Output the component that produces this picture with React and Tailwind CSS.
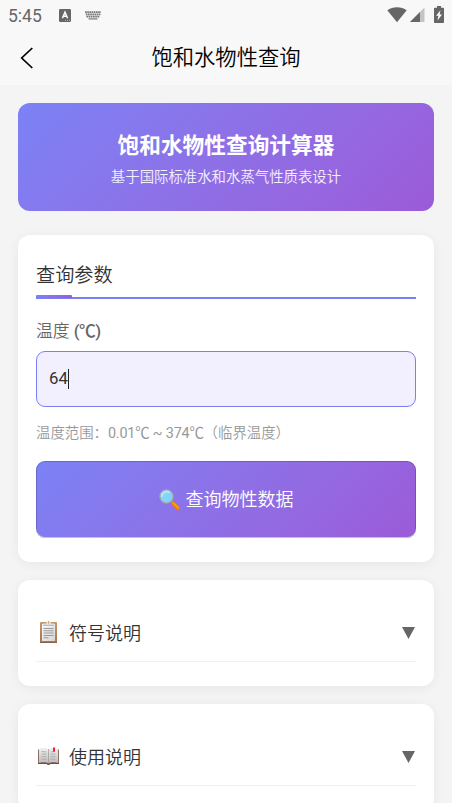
import { useState } from "react";

const sections = [
  { id: "symbols", title: "符号说明", icon: ClipboardIcon },
  { id: "usage", title: "使用说明", icon: BookIcon },
];

function StatusBar() {
  return (
    <div className="flex h-[31px] items-center justify-between text-[#666]">
      <div className="flex items-center pl-2">
        <span className="w-[51px] pt-px text-[17.5px] leading-[30px] font-normal">5:45</span>
        <svg width="12" height="13" viewBox="0 0 12 13" className="mr-[14px]">
          <rect width="12" height="13" rx="1.2" fill="#666" />
          <path d="M3.4 9.2 6 3.2l2.6 6M4.4 7.3h3.2" fill="none" stroke="#fff" strokeWidth="1.5" />
          <path d="M6 11.3h1M8 11.3h1M10 11.3h1" stroke="#ccc" strokeWidth="0.8" />
        </svg>
        <svg width="16" height="9" viewBox="0 0 16 9" className="mb-px" stroke="#777" fill="none">
          <path d="M0 1.1h16M.8 3.4h14.6M1.4 5.6h13.4" strokeWidth="1.6" strokeDasharray="1.7 .5" />
          <path d="M3.5 7.9h9" strokeWidth="1.2" />
        </svg>
      </div>
      <div className="flex items-center pr-[8px] pb-[2px]">
        <svg width="20" height="16" viewBox="0 0 20 16" className="mr-[3px]">
          <path d="M10 15.2.3 3.2C3 1.2 6.3.2 10 .2s7 1 9.700 3z" fill="#666" />
        </svg>
        <svg width="15" height="15" viewBox="0 0 15 15" className="mr-[9px]">
          <path d="M0 15 14.500.5V15z" fill="#c4c4c4" />
          <path d="M0 15 10 5v10z" fill="#666" />
        </svg>
        <svg width="10" height="17" viewBox="0 0 10 17">
          <path d="M3 0h4v1.700h2.200q.8 0 .8.8V16.200q0 .8-.8.8H.8q-.8 0-.8-.8V2.500q0-.8.8-.8H3z" fill="#666" />
          <path d="M6.500 4.300 2.100 9.800h2.300l-.9 4.600 4.500-6H5.600z" fill="#fff" />
        </svg>
      </div>
    </div>
  );
}

function SearchIcon() {
  return (
    <svg width="22" height="22" viewBox="0 0 22 22">
      <path d="m12.200 12.200 3 3" stroke="#a49a94" strokeWidth="2" />
      <path d="m14.200 14.600 4.900 4.900" stroke="#f57c00" strokeWidth="3.600" strokeLinecap="round" />
      <path d="m14.400 14.100 4.700 4.500" stroke="#ffa000" strokeWidth="2" strokeLinecap="round" />
      <circle cx="7.500" cy="7.500" r="6.500" fill="#81d4fa" stroke="#a5aaad" strokeWidth="1.300" />
      <path d="M2.700 7.300a4.800 4.800 0 0 1 7.400-4" fill="none" stroke="#b3e9fd" strokeWidth="1.800" strokeLinecap="round" />
    </svg>
  );
}

function ClipboardIcon() {
  return (
    <svg width="24" height="24" viewBox="0 0 24 24" className="mb-px">
      <defs>
        <linearGradient id="board" x2="0" y2="1">
          <stop stopColor="#c69a68" />
          <stop offset="1" stopColor="#a27652" />
        </linearGradient>
        <linearGradient id="paper" x2="1" y2="1">
          <stop stopColor="#fafafa" />
          <stop offset="1" stopColor="#d5d5d5" />
        </linearGradient>
      </defs>
      <rect x="4" y="2" width="17" height="21" rx=".8" fill="url(#board)" />
      <path d="M4 22.500h17" stroke="#8d6246" />
      <path d="M6 4h13v17H6z" fill="url(#paper)" />
      <path d="M7 3.500h3.300V2q0-.8 1-.8h.5L12 .5h1l.3.7h.5q1 0 1 .8v1.500H18V5H7z" fill="#e2e2df" />
      <path d="M12.500 1.500v2" stroke="#c69a68" />
      <path d="M7 5.400h11" stroke="#aaa" strokeWidth=".8" />
      <path d="M7.500 8.500h10M7.500 10.700h10M7.500 13h10M7.500 15.500h10M7.500 17.800h5" stroke="#999" strokeWidth="1.100" />
    </svg>
  );
}

function BookIcon() {
  return (
    <svg width="24" height="24" viewBox="0 0 24 24" className="mb-px">
      <defs>
        <linearGradient id="pages" x2="0" y2="1">
          <stop stopColor="#f2f2f2" />
          <stop offset="1" stopColor="#bdbdbd" />
        </linearGradient>
      </defs>
      <path d="M2 5.500h21V20h-8.500q-2 1.800-4 0H2z" fill="#8d6e63" />
      <path d="M2 19.500h8.500q2 1.800 4 0H23" fill="none" stroke="#6d4c41" />
      <path d="M3 4.500q5-1.700 9.500.5v13.900q-4.500-1.500-9.500-.2zM22 4.500q-5-1.700-9.500.5v13.900q4.500-1.500 9.500-.2z" fill="url(#pages)" />
      <path d="M12.500 5v13.900" stroke="#9e9e9e" strokeWidth=".8" />
      <path
        d="M5.500 7.500 10.500 8M5.500 10l5 .3M5.500 12.500l5 .3M5.500 15l5 .3M14.500 8l3-.3M14.500 10.300l5-.3M14.500 12.800l5-.3M14.500 15.300l5-.3"
        stroke="#aaa"
        strokeWidth=".9"
      />
      <path d="M17 3.500h2v4.400l-1-.5-1 .5z" fill="#ff1b35" />
    </svg>
  );
}

function Card({ className = "", children }) {
  return (
    <div className={`rounded-[12px] bg-white px-[18px] shadow-[0_2px_12px_rgba(0,0,0,0.06)] ${className}`}>
      {children}
    </div>
  );
}

export default function App() {
  const [temperature, setTemperature] = useState("64");

  return (
    <div className="h-[803px] overflow-hidden bg-[#f4f4f4] font-[Roboto,'Noto_Sans_CJK_SC',sans-serif] font-[350] text-[#333]">
      <header className="h-[85px] bg-[#f8f8f8]">
        <StatusBar />
        <div className="grid h-[54px] grid-cols-[60px_1fr_60px] items-center">
          <svg width="14" height="22" viewBox="0 0 14 22" className="ml-5" fill="none" stroke="#000" strokeWidth="1.700">
            <path d="M12.300 1 1.700 11l10.600 10" />
          </svg>
          <h1 className="text-center text-[21.3px] leading-[54px] font-[350] text-black">饱和水物性查询</h1>
        </div>
      </header>

      <main className="px-[18px] pt-[18px]">
        <div className="mb-6 h-[108px] rounded-[12px] bg-linear-135 from-[#7b82f5] to-[#9c5bd8] pt-[26px] text-center text-white">
          <h2 className="text-[21.7px] leading-[34px] font-bold">饱和水物性查询计算器</h2>
          <p className="text-[14.4px] leading-[30px] text-white/90">基于国际标准水和水蒸气性质表设计</p>
        </div>

        <Card className="mb-[18px] h-[327px] pt-6">
          <div className="relative h-10 border-b-2 border-[#7c7ef6]">
            <h3 className="pt-[2px] text-[19.2px] leading-[30px] font-[350]">查询参数</h3>
            <div className="absolute -bottom-px left-0 h-[3px] w-9 rounded-[1px] bg-linear-135 from-[#7b82f5] to-[#9c5bd8]" />
          </div>
          <label htmlFor="temp" className="mt-[19px] block text-[16.8px] leading-[26px] text-[#666]">
            温度 <span className="font-medium tracking-[-0.5px]">(℃)</span>
          </label>
          <div className="mt-[7px] flex h-14 items-center rounded-[9px] border border-[#7b7ff3] bg-[#f2f0fe] pl-3">
            <input
              id="temp"
              value={temperature}
              onChange={(e) => setTemperature(e.target.value)}
              className="w-[19px] bg-transparent text-[16.8px] font-normal outline-none"
            />
            <span className="h-5 w-px bg-[#222]" />
          </div>
          <p className="mt-[17px] text-[14.4px] leading-5 text-[#999]">
            温度范围：<span className="font-normal tracking-[-0.2px]">0.01℃ ~ 374℃</span>（临界温度）
          </p>
          <button className="mt-[17px] flex h-[77px] w-full items-center justify-center gap-[5px] rounded-[9px] bg-linear-135 from-[#7b82f5] to-[#9c5bd8] text-[18px] text-white shadow-[inset_0_-1px_rgba(255,255,255,0.6),inset_0_0_0_1px_rgba(0,0,0,0.18)]">
            <SearchIcon />
            <span>查询物性数据</span>
          </button>
        </Card>

        {sections.map(({ id, title, icon: Icon }) => (
          <Card key={id} className="mb-[18px] h-[106px] pt-6">
            <div className="flex h-[58px] items-center border-b border-[#f0f0f0]">
              <Icon />
              <span className="ml-[9px] pt-[2px] text-[18px]">{title}</span>
              <svg width="13" height="12" viewBox="0 0 13 12" className="mr-px ml-auto">
                <path d="M0 0h13L6.500 12z" fill="#666" />
              </svg>
            </div>
          </Card>
        ))}
      </main>
    </div>
  );
}
